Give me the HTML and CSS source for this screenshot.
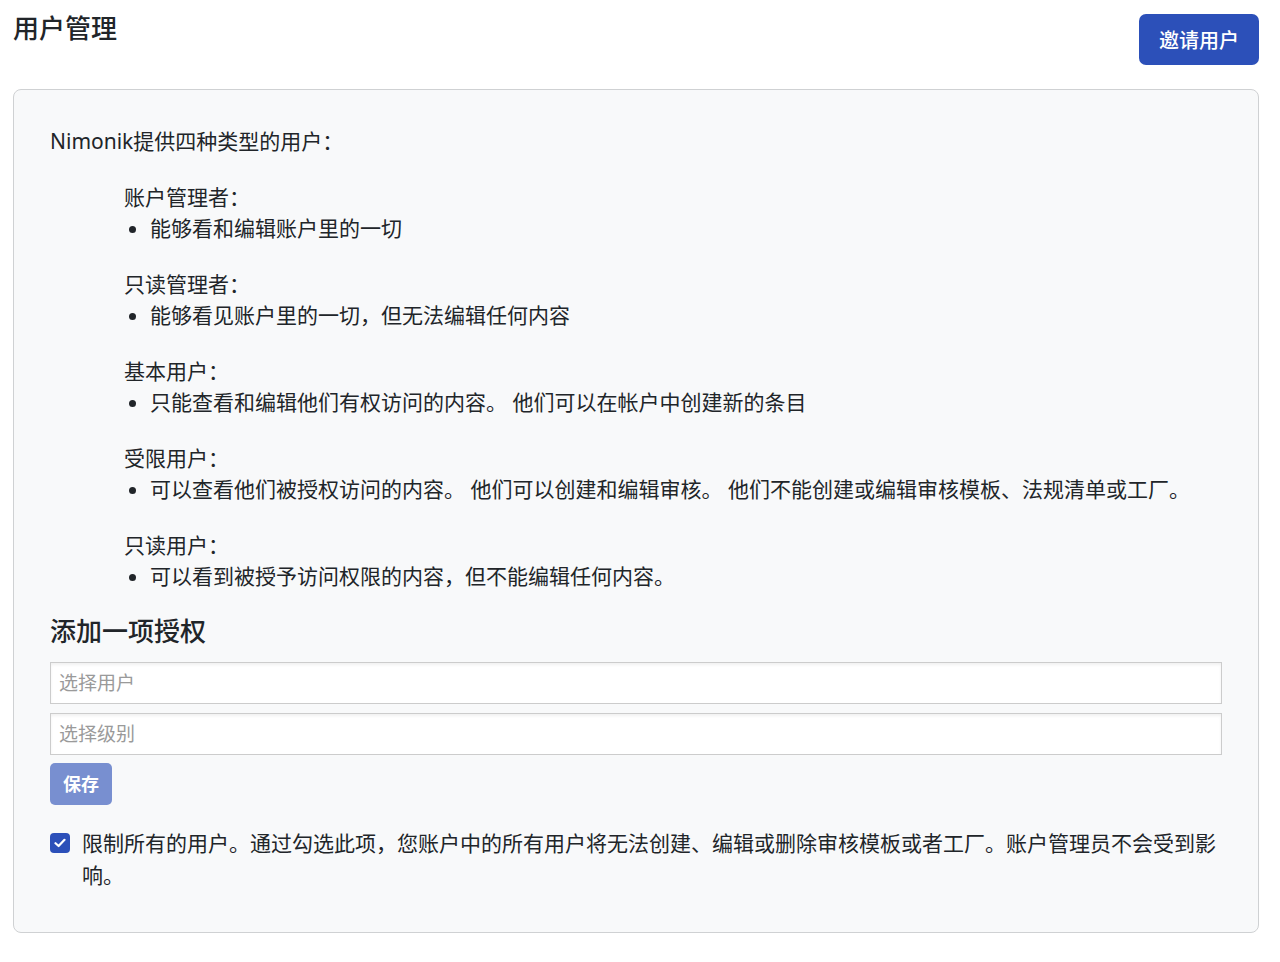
FILE: index.html
```html
<!DOCTYPE html>
<html lang="zh">
    <head>
        <title>用户管理</title>
        <meta charset="utf-8">
        <meta name="viewport" content="width=device-width, initial-scale=1">
        <link rel="stylesheet" href="styles.css">
    </head>
    <body>
        <div class="page-header">
            <h3 class="page-title">用户管理</h3>
            <button class="btn btn-primary">邀请用户</button>
        </div>
        <div class="bordered-div">
            <p class="intro">Nimonik提供四种类型的用户：</p>
            <div class="role-list">
                <div class="role">
                    <div class="role-name">账户管理者：</div>
                    <ul>
                        <li>能够看和编辑账户里的一切</li>
                    </ul>
                </div>
                <div class="role">
                    <div class="role-name">只读管理者：</div>
                    <ul>
                        <li>能够看见账户里的一切，但无法编辑任何内容</li>
                    </ul>
                </div>
                <div class="role">
                    <div class="role-name">基本用户：</div>
                    <ul>
                        <li>只能查看和编辑他们有权访问的内容。 他们可以在帐户中创建新的条目</li>
                    </ul>
                </div>
                <div class="role">
                    <div class="role-name">受限用户：</div>
                    <ul>
                        <li>可以查看他们被授权访问的内容。 他们可以创建和编辑审核。 他们不能创建或编辑审核模板、法规清单或工厂。</li>
                    </ul>
                </div>
                <div class="role">
                    <div class="role-name">只读用户：</div>
                    <ul>
                        <li>可以看到被授予访问权限的内容，但不能编辑任何内容。</li>
                    </ul>
                </div>
            </div>
            <h4 class="section-title">添加一项授权</h4>
            <form class="grant-form">
                <input type="text" class="form-control" placeholder="选择用户">
                <input type="text" class="form-control" placeholder="选择级别">
                <button type="button" class="btn btn-primary btn-save" disabled>保存</button>
            </form>
            <label class="check-row">
                <span class="check-box">
                    <svg width="12" height="10" viewBox="0 0 12 10"><path d="M1.5 5.2 L4.6 8 L10.5 1.8" fill="none" stroke="#fff" stroke-width="2.2" stroke-linecap="round" stroke-linejoin="round"/></svg>
                </span>
                <span>限制所有的用户。通过勾选此项，您账户中的所有用户将无法创建、编辑或删除审核模板或者工厂。账户管理员不会受到影响。</span>
            </label>
        </div>
    </body>
</html>
```

FILE: styles.css
```css
body{
margin: 0;
padding: 14px 21px 30px 13px;
font-family: "Noto Sans", "Noto Sans CJK SC", sans-serif;
font-size: 21px;
line-height: 31px;
color: #212529;
background: #fff;
}
.page-header{
display: flex;
justify-content: space-between;
align-items: flex-start;
margin-bottom: 24px;
}
.page-title{
margin: 0;
font-size: 26px;
font-weight: 500;
line-height: 29px;
}
.btn{
border: none;
border-radius: 7px;
font-family: inherit;
color: #fff;
cursor: pointer;
}
.btn-primary{
background: #2c50b9;
font-size: 20px;
font-weight: 500;
height: 51px;
padding: 0 20px;
}
.bordered-div{
background: #f8f9fa;
border: 1px solid #cfd1d3;
border-radius: 8px;
padding: 36px 36px 41px 36px;
}
.intro{
margin: 0 0 25px 0;
}
.role-list{
margin-left: 74px;
}
.role{
margin-bottom: 25px;
}
.role:last-child{
margin-bottom: 21px;
}
.role ul{
margin: 0;
padding-left: 26px;
}
.section-title{
margin: 0 0 13px 0;
font-size: 26px;
font-weight: 500;
line-height: 36px;
}
.grant-form{
display: flex;
flex-direction: column;
align-items: flex-start;
gap: 9px;
}
.form-control{
box-sizing: border-box;
width: 100%;
height: 42px;
border: 1px solid #ccc;
background: #fff;
box-shadow: inset 0 2px 3px rgba(0,0,0,0.06);
padding: 0 8px;
font-family: inherit;
font-size: 19px;
color: #212529;
}
.form-control::placeholder{
color: #9a9a9a;
}
.btn-save{
height: 42px;
padding: 0 13px 3px 13px;
font-size: 18px;
font-weight: 700;
border-radius: 5px;
margin-top: -1px;
}
.btn-save:disabled{
background: #788fd0;
}
.check-row{
display: flex;
align-items: flex-start;
gap: 12px;
margin-top: 22px;
line-height: 32px;
}
.check-box{
flex: none;
width: 20px;
height: 20px;
margin-top: 6px;
border-radius: 4px;
background: #2c50b9;
display: flex;
align-items: center;
justify-content: center;
}
```
